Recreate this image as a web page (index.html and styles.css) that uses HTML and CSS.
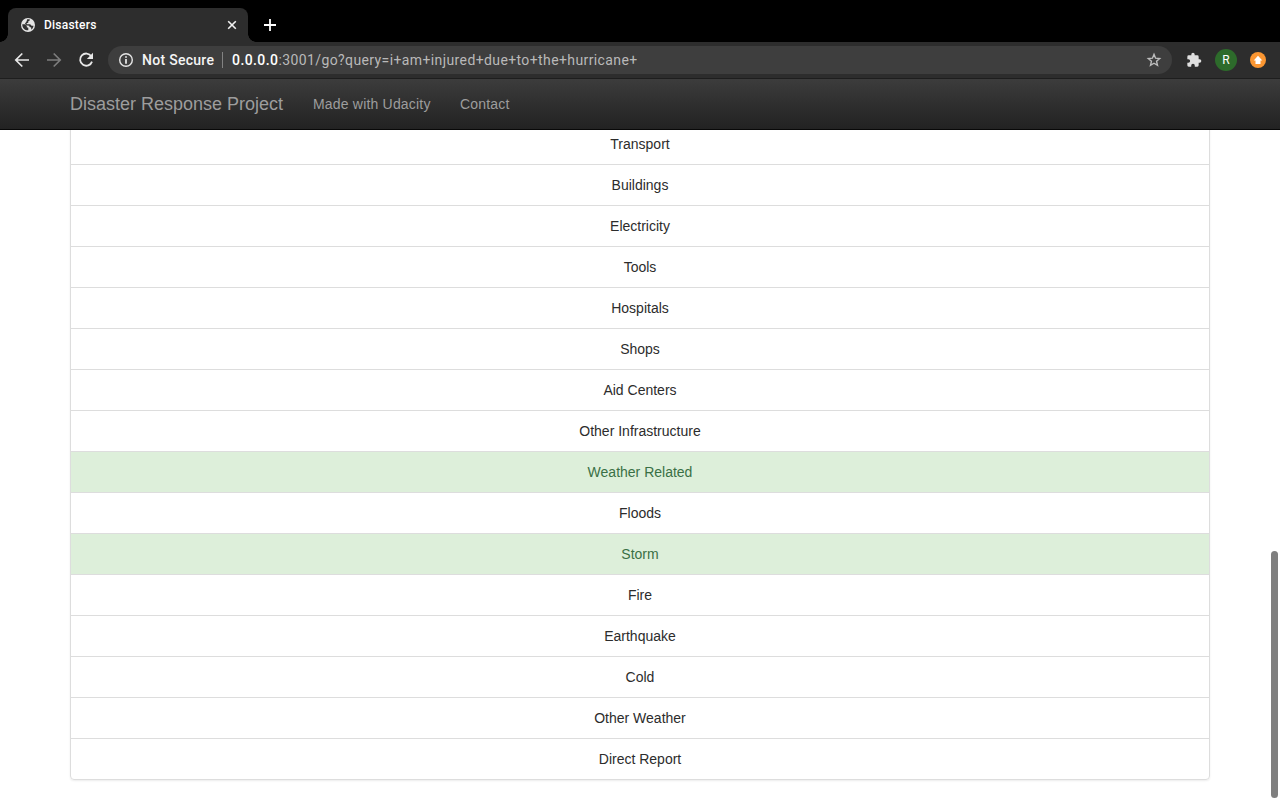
FILE: index.html
```html
<!DOCTYPE html>
<html lang="en">
<head>
<meta charset="utf-8">
<title>Disasters</title>
<link rel="stylesheet" href="styles.css">
</head>
<body>
<div class="window">
  <header class="tabstrip">
    <div class="tab">
      <svg class="globe" width="14" height="14" viewBox="0 0 14 14"><circle cx="7" cy="7" r="7" fill="#e4e4e4"/><path d="M1.300 6.300h2.500l2 1.600v1.300l1.500.5v2.600C4 12.600 1.300 10 1.300 7zM6.200 1.300h2.500v1.200L7.300 3.300v1.500L5.700 5.300v1h3.500l1.400 1.400h1.900c-.2 1.600-1 3-2.300 3.900V9.500L8.600 9 8.200 7.800 5 7.200 4 5.600l1.500-2z" fill="#303030"/></svg>
      <span class="tab-title">Disasters</span>
      <svg class="close" width="10" height="10" viewBox="0 0 10 10"><path d="M1.200 1.200l7.600 7.600M8.800 1.200L1.200 8.800" stroke="#f1f1f1" stroke-width="1.600"/></svg>
    </div>
    <svg class="new-tab" width="12" height="12" viewBox="0 0 12 12"><path d="M6 0v12M0 6h12" stroke="#fff" stroke-width="1.800"/></svg>
  </header>
  <div class="toolbar">
    <svg class="back" width="24" height="24" viewBox="0 0 24 24"><path d="M19 12H6M12.300 5.500 5.800 12l6.500 6.500" fill="none" stroke="#e8e8e8" stroke-width="1.700"/></svg>
    <svg class="forward" width="24" height="24" viewBox="0 0 24 24"><path d="M5 12h13M11.700 5.500l6.500 6.500-6.500 6.500" fill="none" stroke="#7d7d7d" stroke-width="1.700"/></svg>
    <svg class="reload" width="24" height="24" viewBox="0 0 24 24"><path d="M17.300 8.200A6.100 6.100 0 1 0 18 13.600" fill="none" stroke="#e8e8e8" stroke-width="1.800"/><path d="M19 4.800V11h-6.200z" fill="#e8e8e8"/></svg>
    <div class="address">
      <svg class="info" width="14" height="14" viewBox="0 0 14 14"><circle cx="7" cy="7" r="6.300" fill="none" stroke="#e4e4e4" stroke-width="1.400"/><path d="M7 3.200v1.600M7 6v4.700" stroke="#e4e4e4" stroke-width="1.800"/></svg>
      <span class="security">Not Secure</span>
      <span class="divider"></span>
      <span class="url"><b>0.0.0.0</b><span>:3001/go?query=i+am+injured+due+to+the+hurricane+</span></span>
      <svg class="star" width="16" height="16" viewBox="0 0 16 16"><path d="M8 2.300l1.550 3.900 4.150.4-3.150 2.700.95 4.050L8 11.200l-3.500 2.150.95-4.050L2.300 6.600l4.150-.4z" fill="none" stroke="#bdbdbd" stroke-width="1.400"/></svg>
    </div>
    <svg class="puzzle" width="16" height="16" viewBox="0 0 24 24"><path d="M20.500 11H19V7a2 2 0 0 0-2-2h-4V3.500a2.500 2.500 0 0 0-5 0V5H4a2 2 0 0 0-2 2v3.800h1.500a2.700 2.700 0 0 1 0 5.400H2V20a2 2 0 0 0 2 2h3.800v-1.500a2.700 2.700 0 0 1 5.400 0V22H17a2 2 0 0 0 2-2v-4h1.500a2.500 2.500 0 0 0 0-5z" fill="#dfdfdf"/></svg>
    <span class="avatar">R</span>
    <svg class="update" width="16" height="16" viewBox="0 0 16 16"><circle cx="8" cy="8" r="8" fill="#fa9632"/><path d="M8 3.800 12.300 8.500h-1.800V12h-5V8.500H3.700z" fill="#fff"/></svg>
  </div>
  <nav class="navbar">
    <a class="brand">Disaster Response Project</a>
    <a class="nav-link udacity">Made with Udacity</a>
    <a class="nav-link contact">Contact</a>
  </nav>
  <main class="page">
    <ul class="list">
      <li class="item">Transport</li>
      <li class="item">Buildings</li>
      <li class="item">Electricity</li>
      <li class="item">Tools</li>
      <li class="item">Hospitals</li>
      <li class="item">Shops</li>
      <li class="item">Aid Centers</li>
      <li class="item">Other Infrastructure</li>
      <li class="item success">Weather Related</li>
      <li class="item">Floods</li>
      <li class="item success">Storm</li>
      <li class="item">Fire</li>
      <li class="item">Earthquake</li>
      <li class="item">Cold</li>
      <li class="item">Other Weather</li>
      <li class="item">Direct Report</li>
    </ul>
    <div class="scrollbar"></div>
  </main>
</div>
</body>
</html>
```
FILE: styles.css
```css
* { box-sizing: border-box; }
body { margin: 0; background: #fff; font-family: "Liberation Sans", Arial, sans-serif; }
svg { display: block; flex: none; }
.window { width: 1280px; height: 800px; overflow: hidden; display: flex; flex-direction: column; }
.tabstrip { height: 42px; flex: none; background: #000; padding: 8px 0 0 8px; display: flex; }
.tab { position: relative; width: 240px; height: 34px; background: #2d2d2d; border-radius: 8px 8px 0 0; display: flex; align-items: center; padding: 0 11px 0 13px; }
.tab::before, .tab::after { content: ""; position: absolute; bottom: 0; width: 8px; height: 8px; }
.tab::before { left: -8px; background: radial-gradient(circle at 0 0, transparent 7.500px, #2d2d2d 8px); }
.tab::after { right: -8px; background: radial-gradient(circle at 100% 0, transparent 7.500px, #2d2d2d 8px); }
.tab-title { margin-left: 9px; font: 500 12px/16px Roboto, sans-serif; letter-spacing: .22px; color: #fff; }
.close { margin-left: auto; }
.new-tab { margin: 11px 0 0 16px; }
.toolbar { height: 37px; flex: none; background: #2d2d2d; border-bottom: 1px solid #1e1e1e; display: flex; align-items: center; padding: 0 14px 0 10px; }
.forward, .reload { margin-left: 8px; }
.address { width: 1064px; height: 28px; margin-left: 10px; border-radius: 14px; background: #3e3e3e; display: flex; align-items: center; padding: 0 10px 0 11px; font: 14px/20px Roboto, sans-serif; white-space: nowrap; }
.security { margin-left: 9px; width: 72px; color: #f4f4f4; font-weight: 500; letter-spacing: .28px; }
.divider { width: 1px; height: 16px; margin: 0 9px 0 8px; background: #828282; }
.url { color: #b9b9b9; letter-spacing: .39px; }
.url b { color: #fff; font-weight: 500; letter-spacing: .42px; }
.star { margin-left: auto; }
.puzzle { margin-left: 14px; }
.avatar { width: 22px; height: 22px; margin-left: 13px; border-radius: 50%; background: #2d6b2b; color: #fff; font: 12px/22px Roboto, sans-serif; text-align: center; }
.update { margin-left: 13px; }
.navbar { height: 51px; flex: none; background: linear-gradient(#3c3c3c, #222); border-bottom: 1px solid #080808; padding: 0 70px; display: flex; align-items: center; white-space: nowrap; color: #9d9d9d; }
.brand { width: 213px; font-size: 18px; line-height: 20px; }
.nav-link { font-size: 14px; line-height: 20px; letter-spacing: .19px; }
.udacity { width: 117px; margin-left: 30px; }
.contact { margin-left: 30px; }
.page { position: relative; flex: 1; min-height: 0; overflow: hidden; padding: 0 70px; }
.list { list-style: none; margin: -7px 0 0; padding: 0; border-radius: 4px; box-shadow: 0 1px 2px rgba(0, 0, 0, .075); }
.item { height: 42px; margin-bottom: -1px; padding: 10px 15px; border: 1px solid #ddd; font-size: 14px; line-height: 20px; text-align: center; color: #2c2c2c; }
.item:last-child { margin-bottom: 0; border-radius: 0 0 4px 4px; }
.success { background: #dff0d8; background: #ddefda; color: #3a7045; }
.scrollbar { position: absolute; top: 421px; right: 2px; width: 7px; height: 247px; border-radius: 4px; background: #7f7f7f; }
```
